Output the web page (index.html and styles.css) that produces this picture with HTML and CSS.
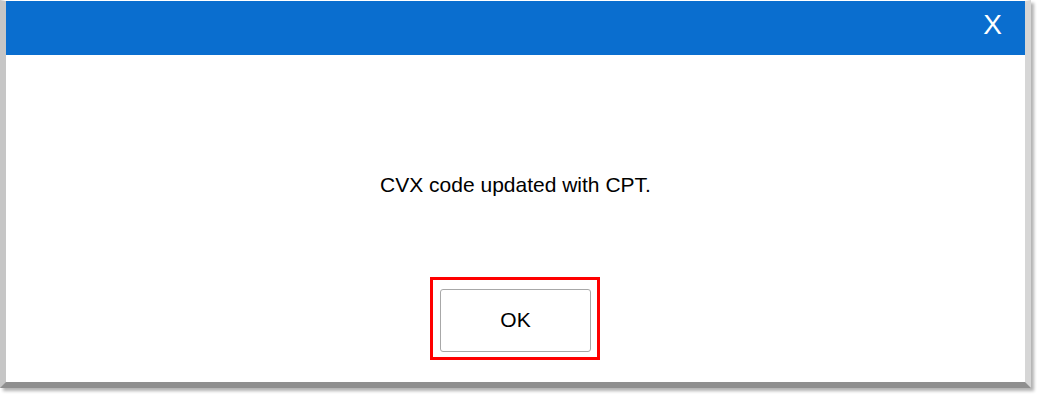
FILE: index.html
```html
<!DOCTYPE html>
<html>
<head>
<meta charset="utf-8">
<link rel="stylesheet" href="styles.css">
</head>
<body>
<div class="frame">
  <div class="dialog">
    <div class="header">
      <span class="close">X</span>
    </div>
    <div class="content">
      <p class="message">CVX code updated with CPT.</p>
      <div class="highlight">
        <button class="ok">OK</button>
      </div>
    </div>
  </div>
</div>
</body>
</html>
```
FILE: styles.css
```css
html, body {
  margin: 0;
  padding: 0;
  background: #ffffff;
}
body {
  width: 1038px;
  height: 394px;
  overflow: hidden;
  font-family: "Liberation Sans", Arial, sans-serif;
}
.frame {
  width: 1031px;
  height: 388px;
  box-sizing: border-box;
  border-top: 1px solid #ffffff;
  border-left: 6px solid #c6c6c6;
  border-right: 6px solid #d6d6d6;
  border-bottom: 6px solid #8f8f8f;
  box-shadow: 3px 3px 3px rgba(0, 0, 0, 0.3);
}
.dialog {
  width: 1019px;
  height: 381px;
  background: #ffffff;
  display: flex;
  flex-direction: column;
}
.header {
  height: 54px;
  background: #0a6ecf;
  display: flex;
  align-items: center;
  justify-content: flex-end;
  padding-right: 23px;
}
.close {
  color: #ffffff;
  font-size: 28px;
  line-height: 1;
  margin-top: -6px;
}
.content {
  flex: 1;
  display: flex;
  flex-direction: column;
  align-items: center;
  padding-top: 118px;
}
.message {
  margin: 0;
  font-size: 21px;
  line-height: 24px;
  color: #000000;
}
.highlight {
  margin-top: 80px;
  margin-right: 1px;
  border: 3px solid #ff0000;
  padding: 9px 6px 5px 7px;
}
.ok {
  display: block;
  width: 151px;
  height: 63px;
  background: #ffffff;
  border: 1px solid #a8a8a8;
  border-radius: 3px;
  font-family: "Liberation Sans", Arial, sans-serif;
  font-size: 21px;
  color: #000000;
  padding: 0 0 2px 0;
}
```
